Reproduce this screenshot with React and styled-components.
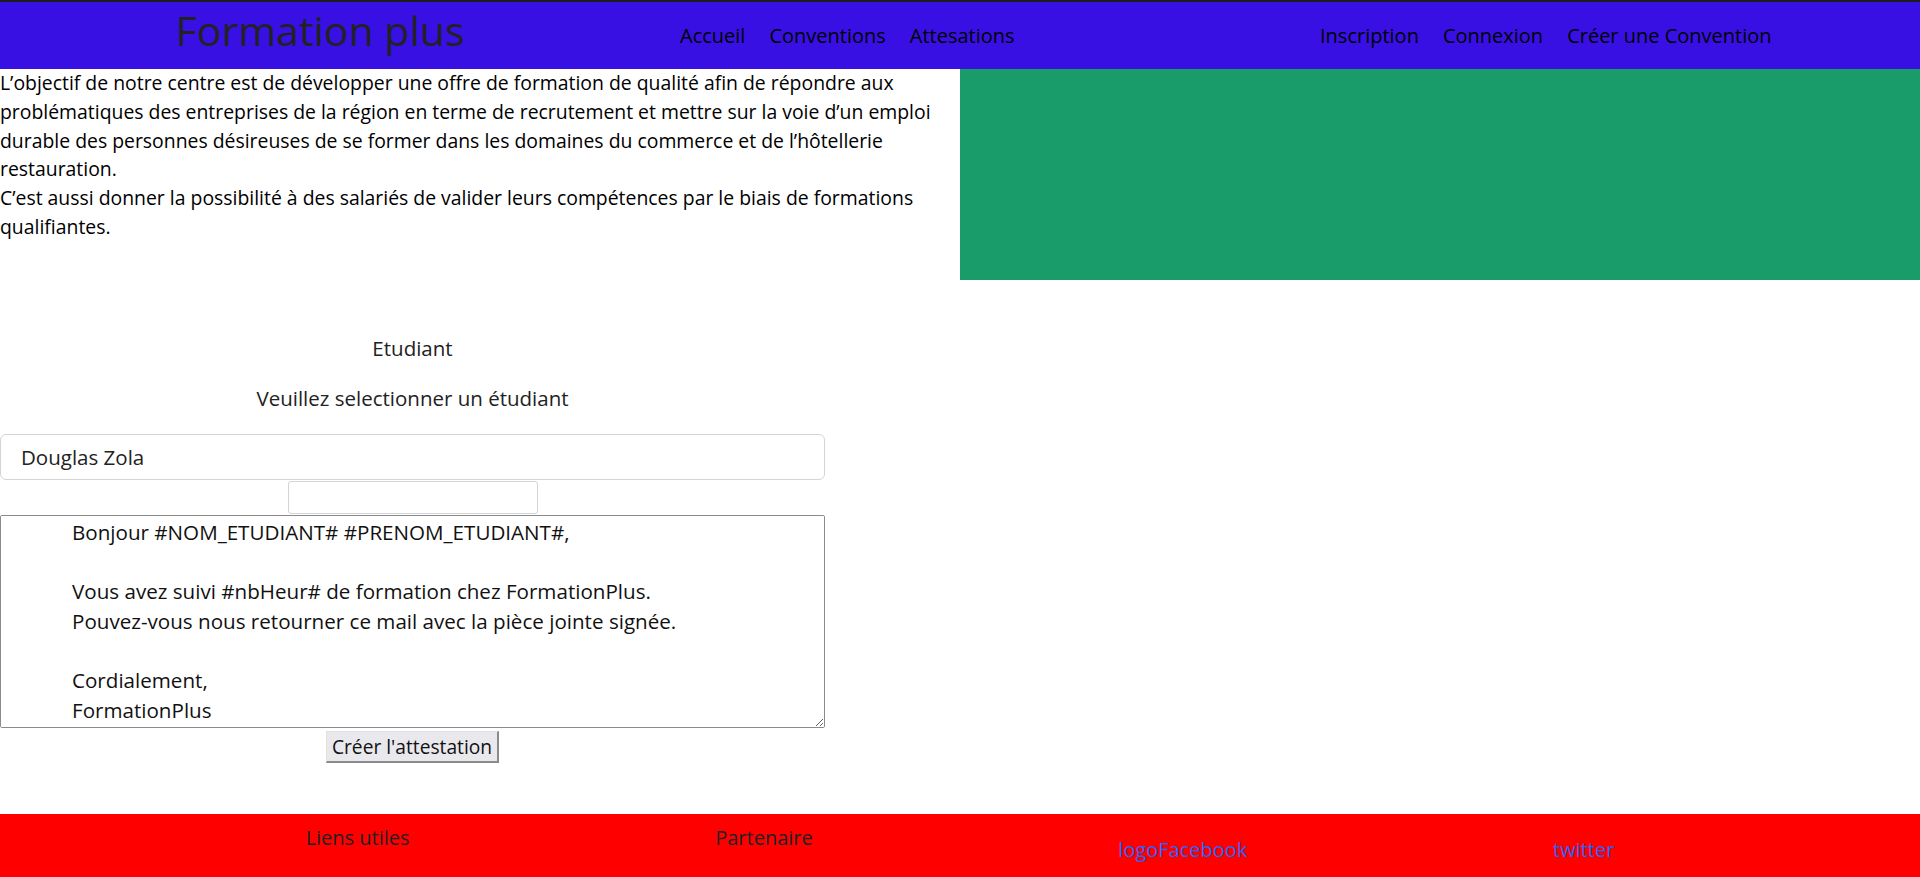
import React from 'react'
import styled, { createGlobalStyle } from 'styled-components'

const GlobalStyle = createGlobalStyle`
  html, body {
    margin: 0;
    padding: 0;
    background: #fff;
  }
  body {
    font-family: "Open Sans", Lato, sans-serif;
    color: #000;
  }
`

const Header = styled.header`
  display: grid;
  grid-template-columns: repeat(3, 1fr);
  height: 67px;
  background: #3810e3;
  border-top: 2px solid #1c1c1c;
`

const Logo = styled.div`
  text-align: center;
  font-family: "Open Sans", sans-serif;
  font-size: 41px;
  line-height: 56px;
  color: #222;
`

const NavList = styled.ul`
  display: flex;
  gap: 24px;
  list-style: none;
  margin: 0;
  padding: 20px 0 0 40px;
`

const NavLink = styled.a`
  font-family: "Open Sans", sans-serif;
  font-size: 20px;
  line-height: 27px;
  color: #000;
  text-decoration: none;
`

const Top = styled.section`
  display: flex;
`

const Intro = styled.div`
  width: 960px;
  font-size: 19.4px;
  line-height: 28.8px;
`

const Para = styled.p`
  margin: 0;
`

const Banner = styled.div`
  flex: 1;
  height: 211px;
  background: #1a9c6a;
`

const Form = styled.form`
  width: 825px;
  display: flex;
  flex-direction: column;
  align-items: center;
  font-size: 20.5px;
  line-height: 28.8px;
  color: #222;
`

const Label = styled.p`
  margin: ${p => p.$first ? '54px' : '0'} 0 21px;
`

const Select = styled.select`
  appearance: none;
  width: 100%;
  height: 46px;
  box-sizing: border-box;
  padding: 0 20px;
  border: 1px solid #d4d4d8;
  border-radius: 6px;
  background: #fff;
  font-family: "Open Sans", sans-serif;
  font-size: 20.5px;
  color: #222;
`

const SmallInput = styled.input`
  width: 250px;
  height: 33px;
  box-sizing: border-box;
  margin: 1px 0 1px;
  border: 1px solid #d4d4d8;
  border-radius: 3px;
`

const Message = styled.textarea`
  width: 100%;
  height: 213px;
  box-sizing: border-box;
  padding: 2px 2px 2px 71px;
  border: 1px solid #8a8a8a;
  border-radius: 2px;
  font-family: "Open Sans", sans-serif;
  font-size: 20.6px;
  line-height: 29.7px;
  color: #111;
  resize: both;
`

const Submit = styled.button`
  margin: 3px 0 51px;
  height: 32px;
  padding: 0 5px;
  background: #e9e9ed;
  border-style: solid;
  border-width: 1px 2px 2px 1px;
  border-color: #e0e0e0 #8a8a8a #8a8a8a #e0e0e0;
  font-family: "Open Sans", sans-serif;
  font-size: 19.2px;
  color: #111;
`

const Footer = styled.footer`
  display: flex;
  justify-content: space-evenly;
  align-items: flex-start;
  height: 64px;
  background: #ff0000;
  font-family: "Open Sans", sans-serif;
  font-size: 20px;
  line-height: 30px;
`

const FooterTitle = styled.div`
  margin-top: 9px;
  color: #222;
`

const FooterLink = styled.a`
  margin-top: 21px;
  color: #2a62f5;
  text-decoration: none;
`

const message = `Bonjour #NOM_ETUDIANT# #PRENOM_ETUDIANT#,

Vous avez suivi #nbHeur# de formation chez FormationPlus.
Pouvez-vous nous retourner ce mail avec la pièce jointe signée.

Cordialement,
FormationPlus`

export default function App() {
  return (
    <>
      <GlobalStyle />
      <Header>
        <Logo>Formation plus</Logo>
        <NavList>
          <li><NavLink href="#">Accueil</NavLink></li>
          <li><NavLink href="#">Conventions</NavLink></li>
          <li><NavLink href="#">Attesations</NavLink></li>
        </NavList>
        <NavList>
          <li><NavLink href="#">Inscription</NavLink></li>
          <li><NavLink href="#">Connexion</NavLink></li>
          <li><NavLink href="#">Créer une Convention</NavLink></li>
        </NavList>
      </Header>
      <Top>
        <Intro>
          <Para>
            L’objectif de notre centre est de développer une offre de formation de qualité afin de répondre aux
            problématiques des entreprises de la région en terme de recrutement et mettre sur la voie d’un emploi
            durable des personnes désireuses de se former dans les domaines du commerce et de l’hôtellerie
            restauration.
          </Para>
          <Para>
            C’est aussi donner la possibilité à des salariés de valider leurs compétences par le biais de formations
            qualifiantes.
          </Para>
        </Intro>
        <Banner />
      </Top>
      <Form onSubmit={e => e.preventDefault()}>
        <Label $first>Etudiant</Label>
        <Label>Veuillez selectionner un étudiant</Label>
        <Select defaultValue="dz">
          <option value="dz">Douglas Zola</option>
        </Select>
        <SmallInput type="text" />
        <Message defaultValue={message} />
        <Submit type="submit">Créer l'attestation</Submit>
      </Form>
      <Footer>
        <FooterTitle>Liens utiles</FooterTitle>
        <FooterTitle>Partenaire</FooterTitle>
        <FooterLink href="#">logoFacebook</FooterLink>
        <FooterLink href="#">twitter</FooterLink>
      </Footer>
    </>
  )
}
